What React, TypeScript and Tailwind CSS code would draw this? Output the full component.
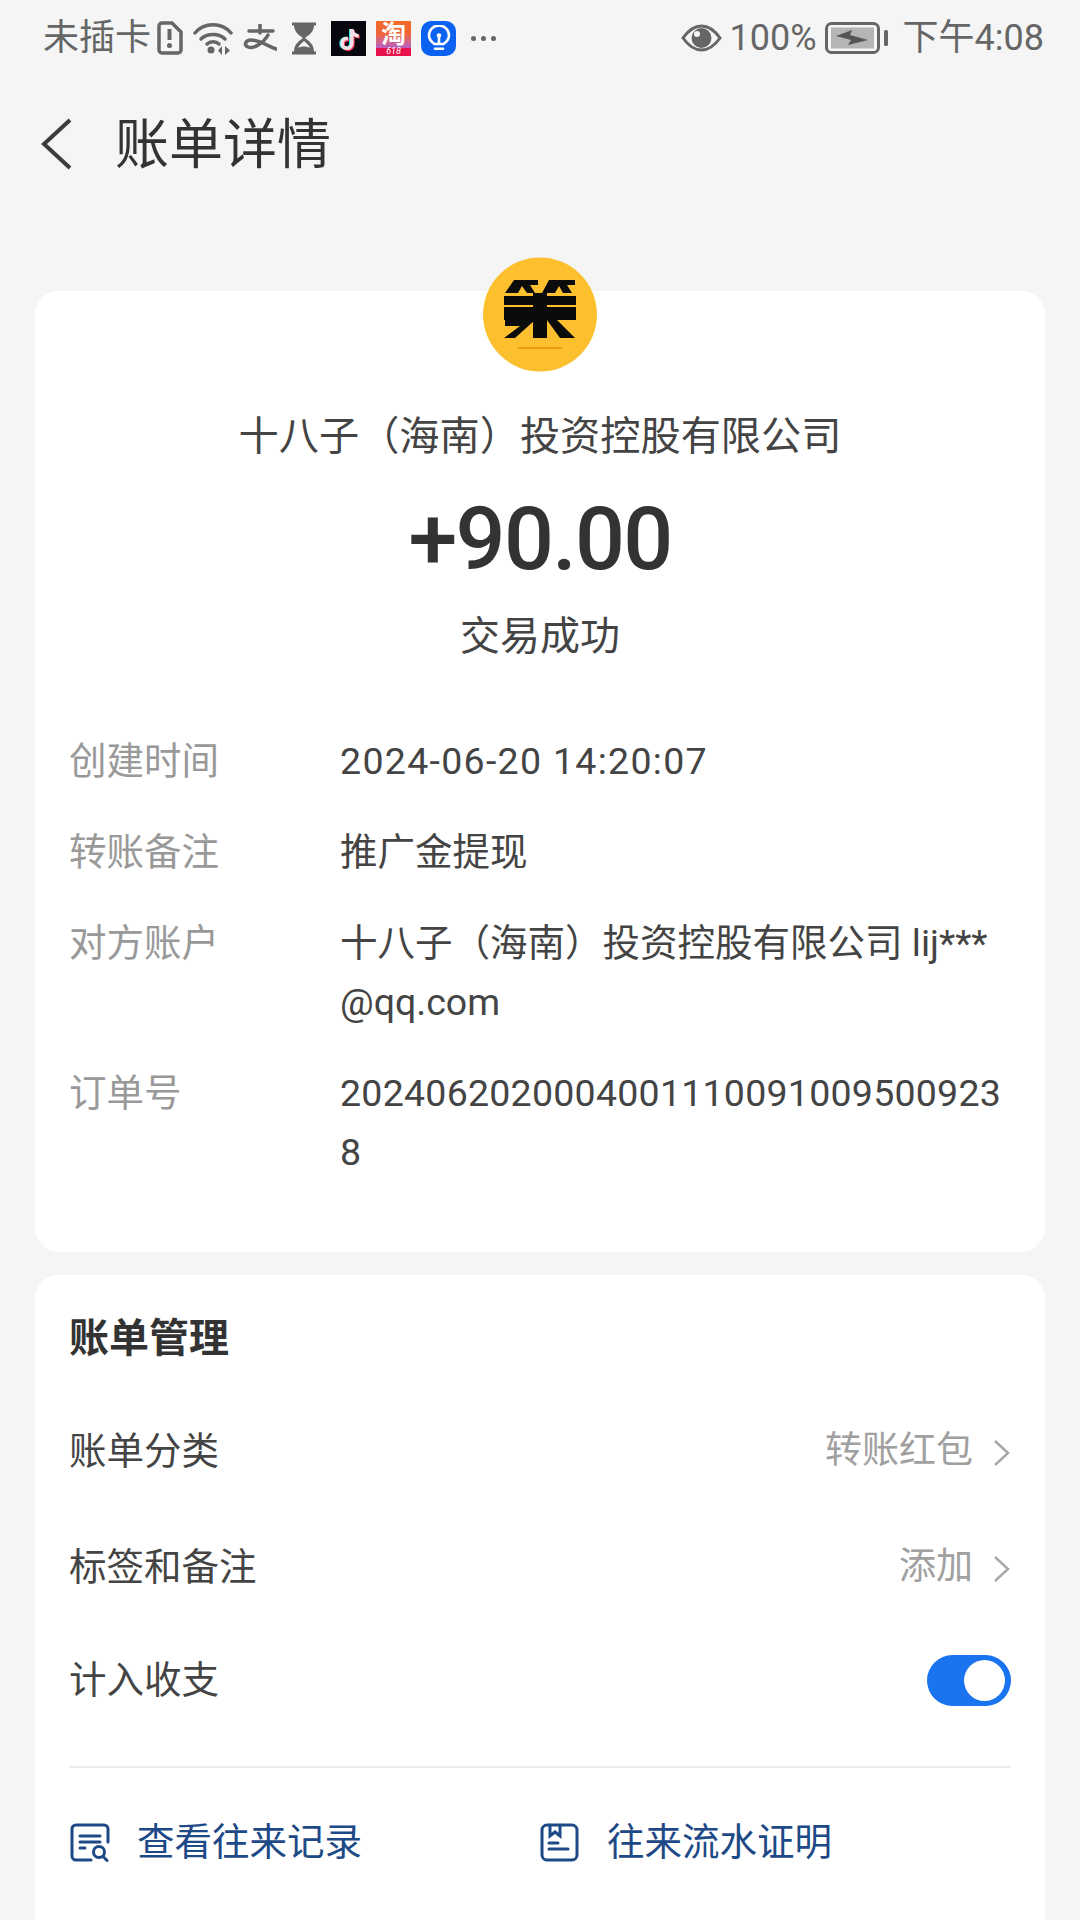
import { FaTiktok } from "react-icons/fa";

function SimAlert() {
    return (
        <svg width="26" height="34" viewBox="0 0 26 34" fill="none" stroke="#666" strokeWidth="3.500">
            <path d="M5 2h10l9 9v18a3 3 0 0 1-3 3H5a3 3 0 0 1-3-3V5a3 3 0 0 1 3-3z" />
            <path d="M12.500 8v11" strokeWidth="4" />
            <circle cx="12.500" cy="24.500" r="2.500" fill="#666" stroke="none" />
        </svg>
    )
}

function WifiIcon() {
    return (
        <svg width="40" height="33" viewBox="0 0 40 33" fill="none" stroke="#666" strokeWidth="3.500" strokeLinecap="round">
            <path d="M2 11C11 0 29 0 38 11" />
            <path d="M8 17c6-6 18-6 24 0" />
            <path d="M14 22c3-3 9-3 12 0" />
            <circle cx="18" cy="28" r="3.500" fill="#666" stroke="none" />
            <path d="M29 24v9l-4-4.500zM32 24v9l5-4.500z" fill="#666" stroke="none" />
        </svg>
    )
}

function AlipayIcon() {
    return (
        <svg width="34" height="28" viewBox="0 0 34 28" fill="none" stroke="#666" strokeWidth="3.500" strokeLinecap="round">
            <path d="M17 1v8M6 7h24" />
            <path d="M25 11C20 20 10 25 5 23 0 21 3 16 8 16c8 0 17 6 25 9" />
        </svg>
    )
}

function HourglassIcon() {
    return (
        <svg width="26" height="33" viewBox="0 0 26 33" fill="none">
            <path d="M3 3h20c0 7-5 10-9 13 4 3 9 6 9 14H3c0-8 5-11 9-14-4-3-9-6-9-13z" fill="#666" />
            <path d="M13 19c-2 2-5 4-6 7 3-2 9-2 12 0-1-3-4-5-6-7z" fill="#f5f5f5" />
            <path d="M1 2h24M1 31h24" stroke="#666" strokeWidth="3" />
        </svg>
    )
}

function TiktokIcon() {
    return (
        <div className="relative h-[35px] w-[35px] bg-[#07070f]">
            <FaTiktok className="absolute left-[7px] top-[8px] text-[21px] text-[#25f4ee]" />
            <FaTiktok className="absolute left-[9px] top-[9px] text-[21px] text-[#fe2c55]" />
            <FaTiktok className="absolute left-[8px] top-[8px] text-[21px] text-[#f4dfe4]" />
        </div>
    )
}

function TaobaoIcon() {
    return (
        <div className="flex h-[35px] w-[35px] flex-col overflow-hidden">
            <div className="flex h-[27px] items-center justify-center bg-gradient-to-b from-[#f26a25] via-[#f0643a] to-[#b85cc0] text-[25px] leading-none font-bold text-white">淘</div>
            <div className="flex h-[8px] items-center justify-center bg-[#e8134c] text-[9px] leading-none text-white italic">618</div>
        </div>
    )
}

function BulbIcon() {
    return (
        <div className="flex h-[35px] w-[35px] items-center justify-center rounded-[10px] bg-[#0c62f0]">
            <svg width="24" height="26" viewBox="0 0 24 26" fill="none" stroke="#fff" strokeWidth="2.600" strokeLinecap="round">
                <path d="M7.500 19C4 16.500 2 14 2 10.500a10 10 0 0 1 20 0c0 3.500-2 6-5.500 8.500z" />
                <path d="M12 18v-5" />
                <circle cx="12" cy="10.500" r="2.200" fill="#fff" stroke="none" />
                <path d="M8 23.700h8" />
            </svg>
        </div>
    )
}

function EyeIcon() {
    return (
        <svg width="41" height="28" viewBox="0 0 41 28" fill="none">
            <path d="M2 14C8 5.500 14 2 20.500 2S33 5.500 39 14c-6 8.500-12 12-18.500 12S8 22.500 2 14z" stroke="#666" strokeWidth="3" />
            <circle cx="20.500" cy="14" r="10" fill="#666" />
            <circle cx="16" cy="10" r="3" fill="#f5f5f5" />
        </svg>
    )
}

function BatteryIcon() {
    return (
        <svg width="63" height="32" viewBox="0 0 63 32" fill="none">
            <rect x="1.500" y="1.500" width="52" height="29" rx="5" stroke="#666" strokeWidth="3" />
            <rect x="6" y="5.500" width="43" height="21" fill="#b5b5b5" />
            <path d="M11 14l16-6-2 5 18 5-20 5 3-5z" fill="#555" />
            <rect x="59" y="8" width="4" height="16" rx="1.500" fill="#666" />
        </svg>
    )
}

function LogoMark() {
    return (
        <svg width="114" height="115" viewBox="0 0 114 115">
            <circle cx="57" cy="57.500" r="57" fill="#fcbf2d" />
            <g fill="#0b0b0b">
                <polygon points="31,23 55,23 55,28 47,28 52,36 44,36 39,29 35,36 22,36" />
                <polygon points="66,23 92,23 92,28 84,28 89,36 80,36 76,29 72,36 59,36" />
                <rect x="21" y="39" width="72" height="9" />
                <rect x="21" y="50" width="72" height="13" />
                <rect x="50" y="36" width="14" height="45" />
                <polygon points="22,63 52,63 32,81 21,81 37,69 22,69" />
                <polygon points="64,63 74,63 92,81 77,81" />
            </g>
            <rect x="35" y="90" width="44" height="2" fill="#ee9a10" />
        </svg>
    )
}

function Chevron() {
    return (
        <svg className="mt-[4px]" width="17" height="28" viewBox="0 0 17 28" fill="none" stroke="#a8a8a8" strokeWidth="2.500">
            <path d="M2 2l13 12L2 26" />
        </svg>
    )
}

function RecordIcon() {
    return (
        <svg width="40" height="39" viewBox="0 0 40 39" fill="none" stroke="#1d4a86" strokeWidth="3" strokeLinecap="round">
            <path d="M38 19V6a4 4 0 0 0-4-4H6a4 4 0 0 0-4 4v27a4 4 0 0 0 4 4h15" />
            <path d="M10 13h20M10 19h20M10 25h5" />
            <circle cx="29" cy="29" r="5.500" />
            <path d="M33 33.500l4 4" />
        </svg>
    )
}

function ProofIcon() {
    return (
        <svg width="39" height="39" viewBox="0 0 39 39" fill="none" stroke="#1d4a86" strokeWidth="3" strokeLinecap="round">
            <rect x="2" y="2" width="35" height="35" rx="5" />
            <path d="M10 2v11l5-4 5 4V2" />
            <path d="M9 20h9M9 26h19" />
        </svg>
    )
}

const details = [
    { label: "创建时间", value: "2024-06-20 14:20:07", tracking: "tracking-[1.3px]" },
    { label: "转账备注", value: "推广金提现", tracking: "" },
    { label: "对方账户", value: "十八子（海南）投资控股有限公司 lij***@qq.com", tracking: "" },
    { label: "订单号", value: "20240620200040011100910095009238", tracking: "tracking-[0.25px]" },
]

export default function App() {
    return (
        <div className="h-[1920px] w-[1080px] overflow-hidden bg-[#f5f5f5] font-['Roboto','Noto_Sans_CJK_SC',sans-serif]">
            <div className="flex h-[76px] items-center justify-between pr-[36px] pl-[43px] text-[#666]">
                <div className="flex items-center">
                    <span className="text-[36px]">未插卡</span>
                    <div className="ml-[6px]"><SimAlert /></div>
                    <div className="ml-[10px]"><WifiIcon /></div>
                    <div className="ml-[10px]"><AlipayIcon /></div>
                    <div className="ml-[14px]"><HourglassIcon /></div>
                    <div className="ml-[14px]"><TiktokIcon /></div>
                    <div className="ml-[10px]"><TaobaoIcon /></div>
                    <div className="ml-[10px]"><BulbIcon /></div>
                    <div className="ml-[15px] flex gap-[5px]">
                        <span className="h-[5px] w-[5px] rounded-full bg-[#666]" />
                        <span className="h-[5px] w-[5px] rounded-full bg-[#666]" />
                        <span className="h-[5px] w-[5px] rounded-full bg-[#666]" />
                    </div>
                </div>
                <div className="flex items-center text-[36px]">
                    <EyeIcon />
                    <span className="ml-[8px]">100%</span>
                    <div className="ml-[8px]"><BatteryIcon /></div>
                    <span className="ml-[15px]">下午4:08</span>
                </div>
            </div>

            <div className="flex h-[134px] items-center pl-[40px]">
                <svg className="mt-[2px]" width="32" height="52" viewBox="0 0 32 52" fill="none" stroke="#3c3c3c" strokeWidth="4">
                    <path d="M30 2L4 26l26 24" />
                </svg>
                <h1 className="mt-[6px] ml-[43px] text-[54px] leading-none text-[#333]">账单详情</h1>
            </div>

            <div className="mx-[35px] mt-[81px] h-[961px] rounded-[24px] bg-white">
                <div className="flex flex-col items-center">
                    <div className="-mt-[34px]"><LogoMark /></div>
                    <div className="mt-[37px] text-[40.200px] leading-[56px] text-[#444]">十八子（海南）投资控股有限公司</div>
                    <div className="mt-[24px] text-[88px] leading-[100px] font-medium tracking-[-1.700px] text-[#333]">+90.00</div>
                    <div className="mt-[20px] text-[40px] leading-[56px] text-[#444]">交易成功</div>
                </div>
                <div className="mt-[67px] flex flex-col gap-[32px] px-[34px]">
                    {details.map((row) => (
                        <div key={row.label} className="flex text-[37.500px] leading-[59px]">
                            <div className="w-[271px] shrink-0 text-[#999]">{row.label}</div>
                            <div className={`break-all text-[#444] ${row.tracking}`}>{row.value}</div>
                        </div>
                    ))}
                </div>
            </div>

            <div className="mx-[35px] mt-[23px] h-[700px] rounded-[24px] bg-white px-[34px]">
                <div className="pt-[37px] text-[40px] leading-[54px] font-bold text-[#333]">账单管理</div>
                <div className="mt-[58px] flex h-[54px] items-center justify-between text-[37.500px] text-[#444]">
                    <span>账单分类</span>
                    <div className="flex items-center gap-[20px] pr-[1px] text-[37px] text-[#a0a0a0]">
                        <span>转账红包</span>
                        <Chevron />
                    </div>
                </div>
                <div className="mt-[62px] flex h-[54px] items-center justify-between text-[37.500px] text-[#444]">
                    <span>标签和备注</span>
                    <div className="flex items-center gap-[20px] pr-[1px] text-[37px] text-[#a0a0a0]">
                        <span>添加</span>
                        <Chevron />
                    </div>
                </div>
                <div className="mt-[59px] flex h-[54px] items-center justify-between text-[37.500px] text-[#444]">
                    <span>计入收支</span>
                    <div className="flex h-[51px] w-[84px] items-center justify-end rounded-full bg-[#1a73ef] pr-[6px]">
                        <span className="h-[41px] w-[41px] rounded-full bg-white" />
                    </div>
                </div>
                <div className="mt-[59px] border-t-2 border-[#ececec]" />
                <div className="mt-[54px] flex text-[37.500px] leading-[40px] text-[#1d4a86]">
                    <div className="ml-[1px] flex w-[470px] items-center gap-[27px]">
                        <RecordIcon />
                        <span>查看往来记录</span>
                    </div>
                    <div className="flex items-center gap-[28px]">
                        <ProofIcon />
                        <span>往来流水证明</span>
                    </div>
                </div>
            </div>
        </div>
    )
}
